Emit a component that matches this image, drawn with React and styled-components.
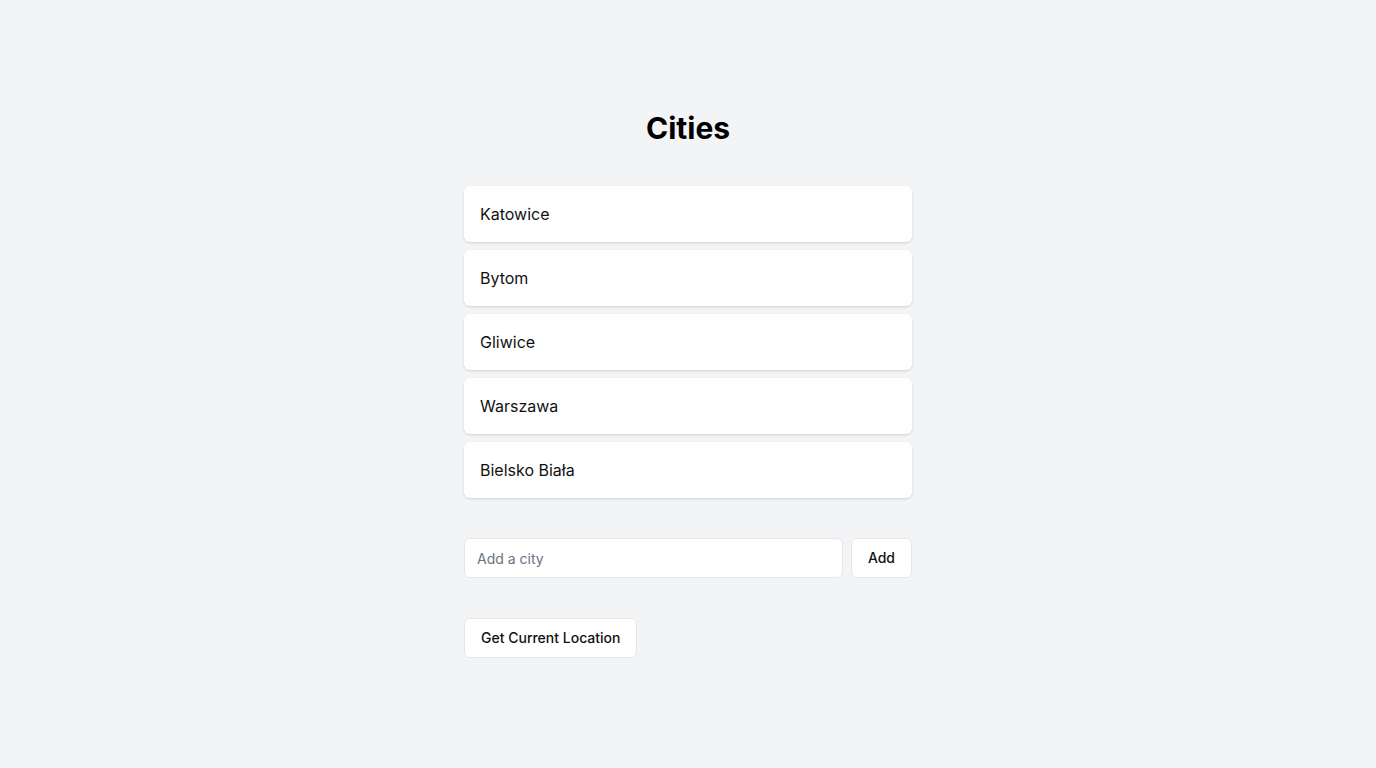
import React, { useState } from 'react'
import styled, { createGlobalStyle } from 'styled-components'

const GlobalStyle = createGlobalStyle`
body {
  margin: 0;
  background: #f3f4f6;
  font-family: Inter, "Noto Sans", sans-serif;
}
`

const initialCities = ['Katowice', 'Bytom', 'Gliwice', 'Warszawa', 'Bielsko Biała']

const App = () => {
    const [cities, setCities] = useState(initialCities)
    const [newCity, setNewCity] = useState('')

    const addCity = e => {
        e.preventDefault()
        if (!newCity.trim()) return
        setCities([...cities, newCity.trim()])
        setNewCity('')
    }

    return (
        <Page>
            <GlobalStyle />
            <Container>
                <Title>Cities</Title>

                <CityList>
                    {cities.map(city => (
                        <CityCard key={city}>{city}</CityCard>
                    ))}
                </CityList>

                <AddForm onSubmit={addCity}>
                    <CityInput
                        type="text"
                        placeholder="Add a city"
                        value={newCity}
                        onChange={e => setNewCity(e.target.value)}
                    />
                    <Button type="submit">Add</Button>
                </AddForm>

                <div>
                    <Button type="button">Get Current Location</Button>
                </div>
            </Container>
        </Page>
    )
}

export default App

const Page = styled.div`
min-height: 100vh;
padding: 110px 0 40px;
box-sizing: border-box;
`

const Container = styled.div`
width: 448px;
margin: 0 auto;
display: flex;
flex-direction: column;
`

const Title = styled.h1`
margin: 0 0 40px;
font-size: 30px;
line-height: 36px;
font-weight: 700;
text-align: center;
color: #000;
`

const CityList = styled.div`
display: flex;
flex-direction: column;
gap: 8px;
`

const CityCard = styled.div`
height: 56px;
display: flex;
align-items: center;
padding: 0 16px;
background: #fff;
border-radius: 6px;
box-shadow: 0 1px 3px rgba(0, 0, 0, 0.1), 0 1px 2px rgba(0, 0, 0, 0.06);
font-size: 16px;
color: #111;
`

const AddForm = styled.form`
display: flex;
gap: 8px;
margin: 40px 0 40px;
`

const CityInput = styled.input`
flex: 1;
height: 40px;
box-sizing: border-box;
padding: 0 12px;
border: 1px solid #e5e7eb;
border-radius: 6px;
background: #fff;
font-family: inherit;
font-size: 14px;
color: #111;
outline: none;

&::placeholder {
  color: #6b7280;
}
`

const Button = styled.button`
height: 40px;
box-sizing: border-box;
padding: 0 16px 1px;
border: 1px solid #e5e7eb;
border-radius: 6px;
background: #fff;
font-family: inherit;
font-size: 14px;
font-weight: 500;
color: #111;
cursor: pointer;
`
